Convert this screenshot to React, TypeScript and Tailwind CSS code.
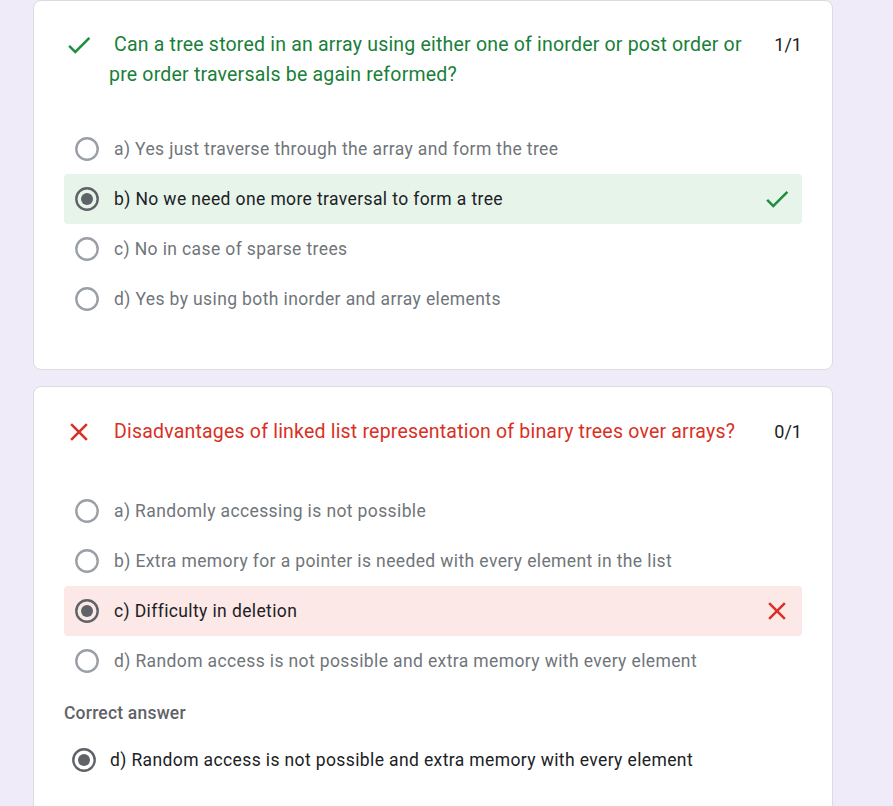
import React from 'react';

type Option = { label: string; selected?: boolean; result?: 'correct' | 'wrong' };

const CheckIcon: React.FC<{ className?: string }> = ({ className }) => (
  <svg viewBox="0 0 24 24" className={className} fill="currentColor">
    <path d="M9 16.17L4.83 12l-1.42 1.41L9 19 21 7l-1.41-1.41z" />
  </svg>
);

const CloseIcon: React.FC<{ className?: string }> = ({ className }) => (
  <svg viewBox="0 0 24 24" className={className} fill="currentColor">
    <path d="M19 6.41L17.59 5 12 10.59 6.41 5 5 6.41 10.59 12 5 17.59 6.41 19 12 13.41 17.59 19 19 17.59 13.41 12z" />
  </svg>
);

const Radio: React.FC<{ checked?: boolean }> = ({ checked }) => (
  <svg viewBox="0 0 24 24" className="h-6 w-6 shrink-0">
    <circle cx="12" cy="12" r="10.7" fill="none" stroke={checked ? '#5f6368' : '#9aa0a6'} strokeWidth="2.4" />
    {checked && <circle cx="12" cy="12" r="6" fill="#5f6368" />}
  </svg>
);

const OptionRow: React.FC<{ option: Option }> = ({ option }) => {
  const bg =
    option.result === 'correct' ? 'bg-[#e6f4ea]' : option.result === 'wrong' ? 'bg-[#fce8e6]' : '';
  return (
    <div className={`flex h-[50px] items-center rounded-[4px] pl-[11px] pr-[10px] ${bg}`}>
      <Radio checked={option.selected} />
      <span
        className={`ml-[15px] flex-1 text-[17.5px] tracking-[0.38px] ${option.selected ? 'text-[#202124]' : 'text-[#70757a]'}`}
      >
        {option.label}
      </span>
      {option.result === 'correct' && <CheckIcon className="h-[30px] w-[30px] text-[#1e8e3e]" />}
      {option.result === 'wrong' && <CloseIcon className="h-[30px] w-[30px] text-[#d93025]" />}
    </div>
  );
};

const q1: Option[] = [
  { label: 'a) Yes just traverse through the array and form the tree' },
  { label: 'b) No we need one more traversal to form a tree', selected: true, result: 'correct' },
  { label: 'c) No in case of sparse trees' },
  { label: 'd) Yes by using both inorder and array elements' },
];

const q2: Option[] = [
  { label: 'a) Randomly accessing is not possible' },
  { label: 'b) Extra memory for a pointer is needed with every element in the list' },
  { label: 'c) Difficulty in deletion', selected: true, result: 'wrong' },
  { label: 'd) Random access is not possible and extra memory with every element' },
];

export default function App() {
  return (
    <div className="min-h-screen bg-[#f0ebf8] pl-[33px] font-['Roboto',sans-serif]">
      <div className="w-[800px]">
        {/* Question 1 */}
        <div className="rounded-lg border border-[#dadce0] bg-white px-[30px] pb-[45px] pt-[29px]">
          <div className="flex items-start">
            <div className="flex h-[30px] w-[45px] shrink-0 items-center">
              <CheckIcon className="h-[30px] w-[30px] text-[#1e8e3e]" />
            </div>
            <div className="flex-1 indent-[5px] text-[19.5px] leading-[30px] tracking-[0.2px] text-[#188038]">
              Can a tree stored in an array using either one of inorder or post order or pre order traversals be again reformed?
            </div>
            <div className="w-[50px] shrink-0 text-right text-[18px] leading-[30px] text-[#202124]">1/1</div>
          </div>
          <div className="mt-[34px]">
            {q1.map((o) => (
              <OptionRow key={o.label} option={o} />
            ))}
          </div>
        </div>

        {/* Question 2 */}
        <div className="mt-[16px] rounded-lg border border-[#dadce0] bg-white px-[30px] pb-[30px] pt-[30px]">
          <div className="flex items-start">
            <div className="flex h-[30px] w-[45px] shrink-0 items-center">
              <CloseIcon className="h-[30px] w-[30px] text-[#d93025]" />
            </div>
            <div className="flex-1 indent-[5px] text-[19.5px] leading-[30px] tracking-[0.2px] text-[#d93025]">
              Disadvantages of linked list representation of binary trees over arrays?
            </div>
            <div className="w-[50px] shrink-0 text-right text-[18px] leading-[30px] text-[#202124]">0/1</div>
          </div>
          <div className="mt-[39px]">
            {q2.map((o) => (
              <OptionRow key={o.label} option={o} />
            ))}
          </div>
          <div className="mt-[15px] text-[17.5px] font-medium leading-[24px] tracking-[0.2px] text-[#5f6368]">
            Correct answer
          </div>
          <div className="mt-[10px] flex h-[50px] items-center pl-[8px]">
            <Radio checked />
            <span className="ml-[14px] text-[17.5px] tracking-[0.38px] text-[#202124]">
              d) Random access is not possible and extra memory with every element
            </span>
          </div>
        </div>
      </div>
    </div>
  );
}
